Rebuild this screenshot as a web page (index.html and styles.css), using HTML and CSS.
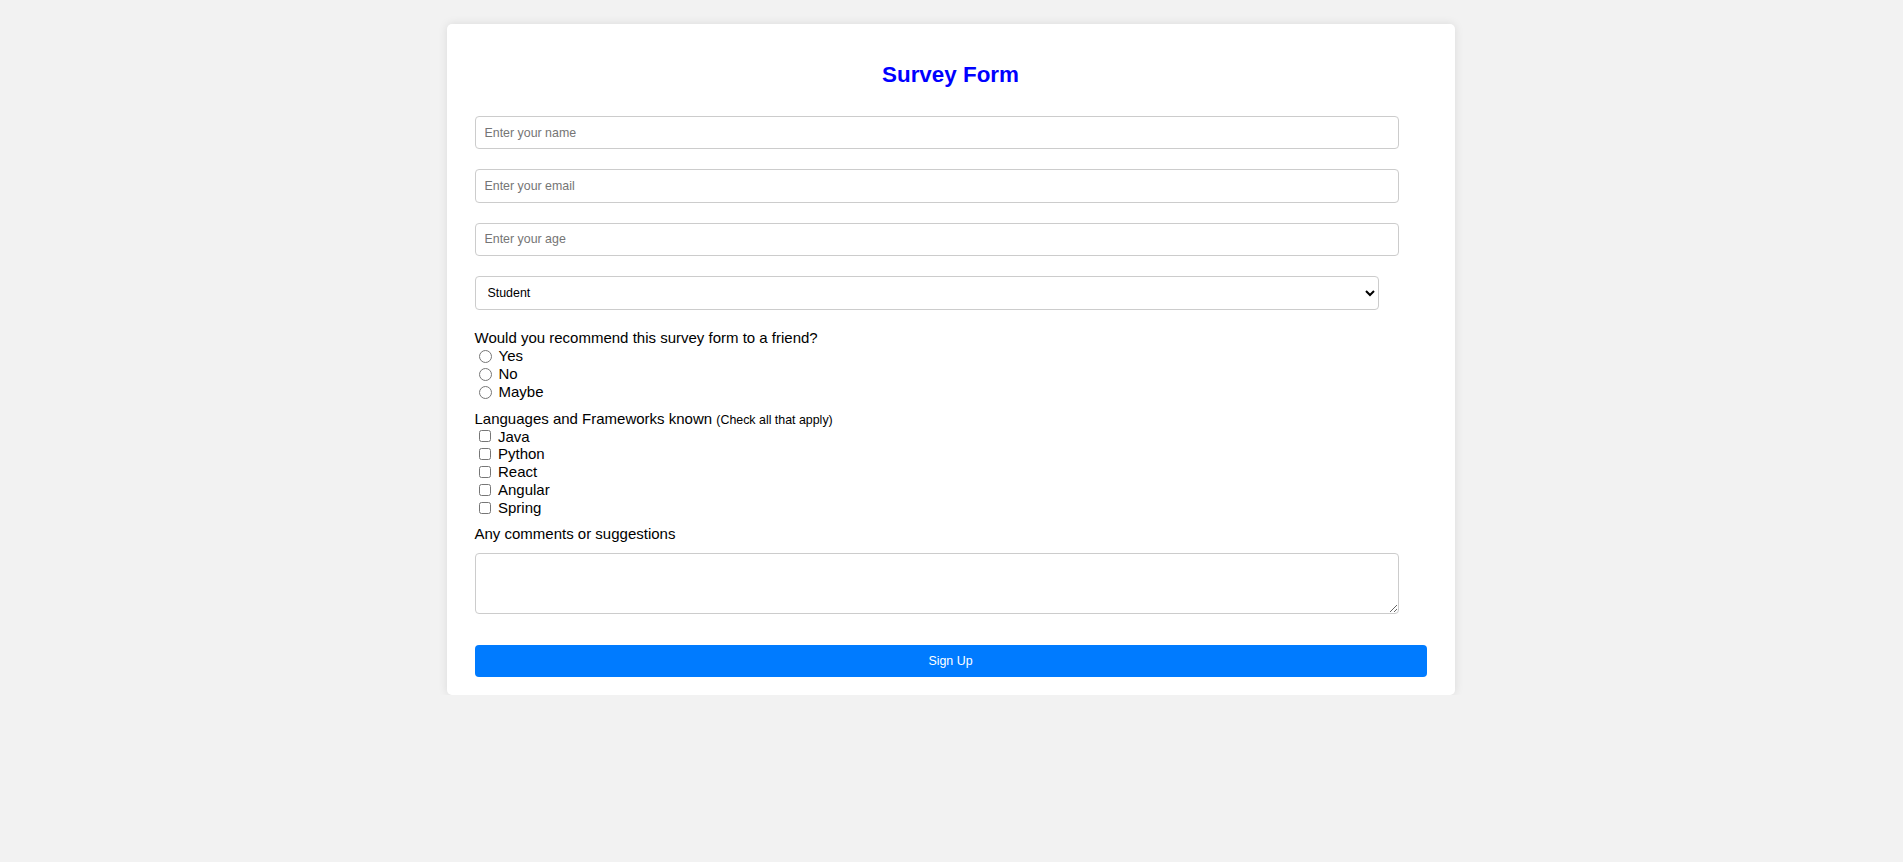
FILE: index.html
```html
<!DOCTYPE html>
<html lang="en">
<head>
<meta charset="utf-8">
<title>Survey Form</title>
<link rel="stylesheet" href="styles.css">
</head>
<body>
<div class="card">
  <h2 class="title">Survey Form</h2>
  <form class="form">
    <input class="field" type="text" placeholder="Enter your name">
    <input class="field" type="email" placeholder="Enter your email">
    <input class="field" type="number" placeholder="Enter your age">
    <select class="dropdown">
      <option>Student</option>
      <option>Full Time Job</option>
      <option>Full Time Learner</option>
      <option>Prefer not to say</option>
      <option>Other</option>
    </select>

    <div class="group radio-group">
      <div class="question">Would you recommend this survey form to a friend?</div>
      <label class="option"><input class="radio" type="radio" name="rec"><span>Yes</span></label>
      <label class="option"><input class="radio" type="radio" name="rec"><span>No</span></label>
      <label class="option"><input class="radio" type="radio" name="rec"><span>Maybe</span></label>
    </div>

    <div class="group check-group">
      <div class="question">Languages and Frameworks known <small class="hint">(Check all that apply)</small></div>
      <label class="option"><input class="check" type="checkbox"><span>Java</span></label>
      <label class="option"><input class="check" type="checkbox"><span>Python</span></label>
      <label class="option"><input class="check" type="checkbox"><span>React</span></label>
      <label class="option"><input class="check" type="checkbox"><span>Angular</span></label>
      <label class="option"><input class="check" type="checkbox"><span>Spring</span></label>
    </div>

    <div class="question comments-label">Any comments or suggestions</div>
    <textarea class="comments"></textarea>

    <button class="submit" type="button">Sign Up</button>
  </form>
</div>
</body>
</html>
```

FILE: styles.css
```css
html, body {
  margin: 0;
  padding: 0;
}

body {
  background: #f2f2f2;
  font-family: "Liberation Sans", Arial, sans-serif;
  color: #000;
  padding: 24px 2px 0 0;
}

.card {
  width: 952px;
  margin: 0 auto;
  padding: 20px 28px 17.6px;
  background: #fff;
  border-radius: 5px;
  box-shadow: 0 0 10px rgba(0, 0, 0, 0.1);
}

.title {
  margin: 18px 0 28px;
  text-align: center;
  color: #0000ff;
  font-size: 22.4px;
  line-height: 26px;
  font-weight: bold;
}

.form {
  margin: 0;
}

.field {
  display: block;
  box-sizing: border-box;
  width: 924.7px;
  height: 33.3px;
  margin: 0 0 20px;
  padding: 0 9px;
  border: 1px solid #ccc;
  border-radius: 4px;
  font-family: "Liberation Sans", Arial, sans-serif;
  font-size: 12.4px;
  background: #fff;
  outline: none;
}

.field::placeholder {
  color: #757575;
}

.dropdown {
  display: block;
  box-sizing: border-box;
  width: 95%;
  height: 34.4px;
  margin: 0 0 19px;
  padding: 0 8px;
  border: 1px solid #ccc;
  border-radius: 4px;
  font-family: "Liberation Sans", Arial, sans-serif;
  font-size: 12.4px;
  color: #000;
  background: #fff;
}

.group {
  margin-bottom: 8.5px;
}

.question {
  font-size: 15px;
  line-height: 18px;
}

.check-group .question,
.check-group .option {
  line-height: 17.8px;
  height: 17.8px;
}

.hint {
  font-size: 12.4px;
}

.option {
  display: flex;
  align-items: center;
  height: 18px;
  font-size: 15px;
  line-height: 18px;
}

.radio {
  width: 13px;
  height: 13px;
  margin: 0 7px 0 4px;
}

.check {
  width: 12px;
  height: 12px;
  margin: 0 7.5px 0 4px;
}

.comments-label {
  line-height: 17.8px;
  margin-bottom: 10px;
}

.comments {
  display: block;
  box-sizing: border-box;
  width: 924.7px;
  height: 61px;
  margin: 0 0 30.7px;
  padding: 8px;
  border: 1px solid #ccc;
  border-radius: 4px;
  font-family: "Liberation Sans", Arial, sans-serif;
  font-size: 12.4px;
}

.submit {
  display: block;
  width: 100%;
  height: 32.7px;
  border: none;
  border-radius: 4px;
  background: #007bff;
  color: #fff;
  font-family: "Liberation Sans", Arial, sans-serif;
  font-size: 12.4px;
  cursor: pointer;
}
```
